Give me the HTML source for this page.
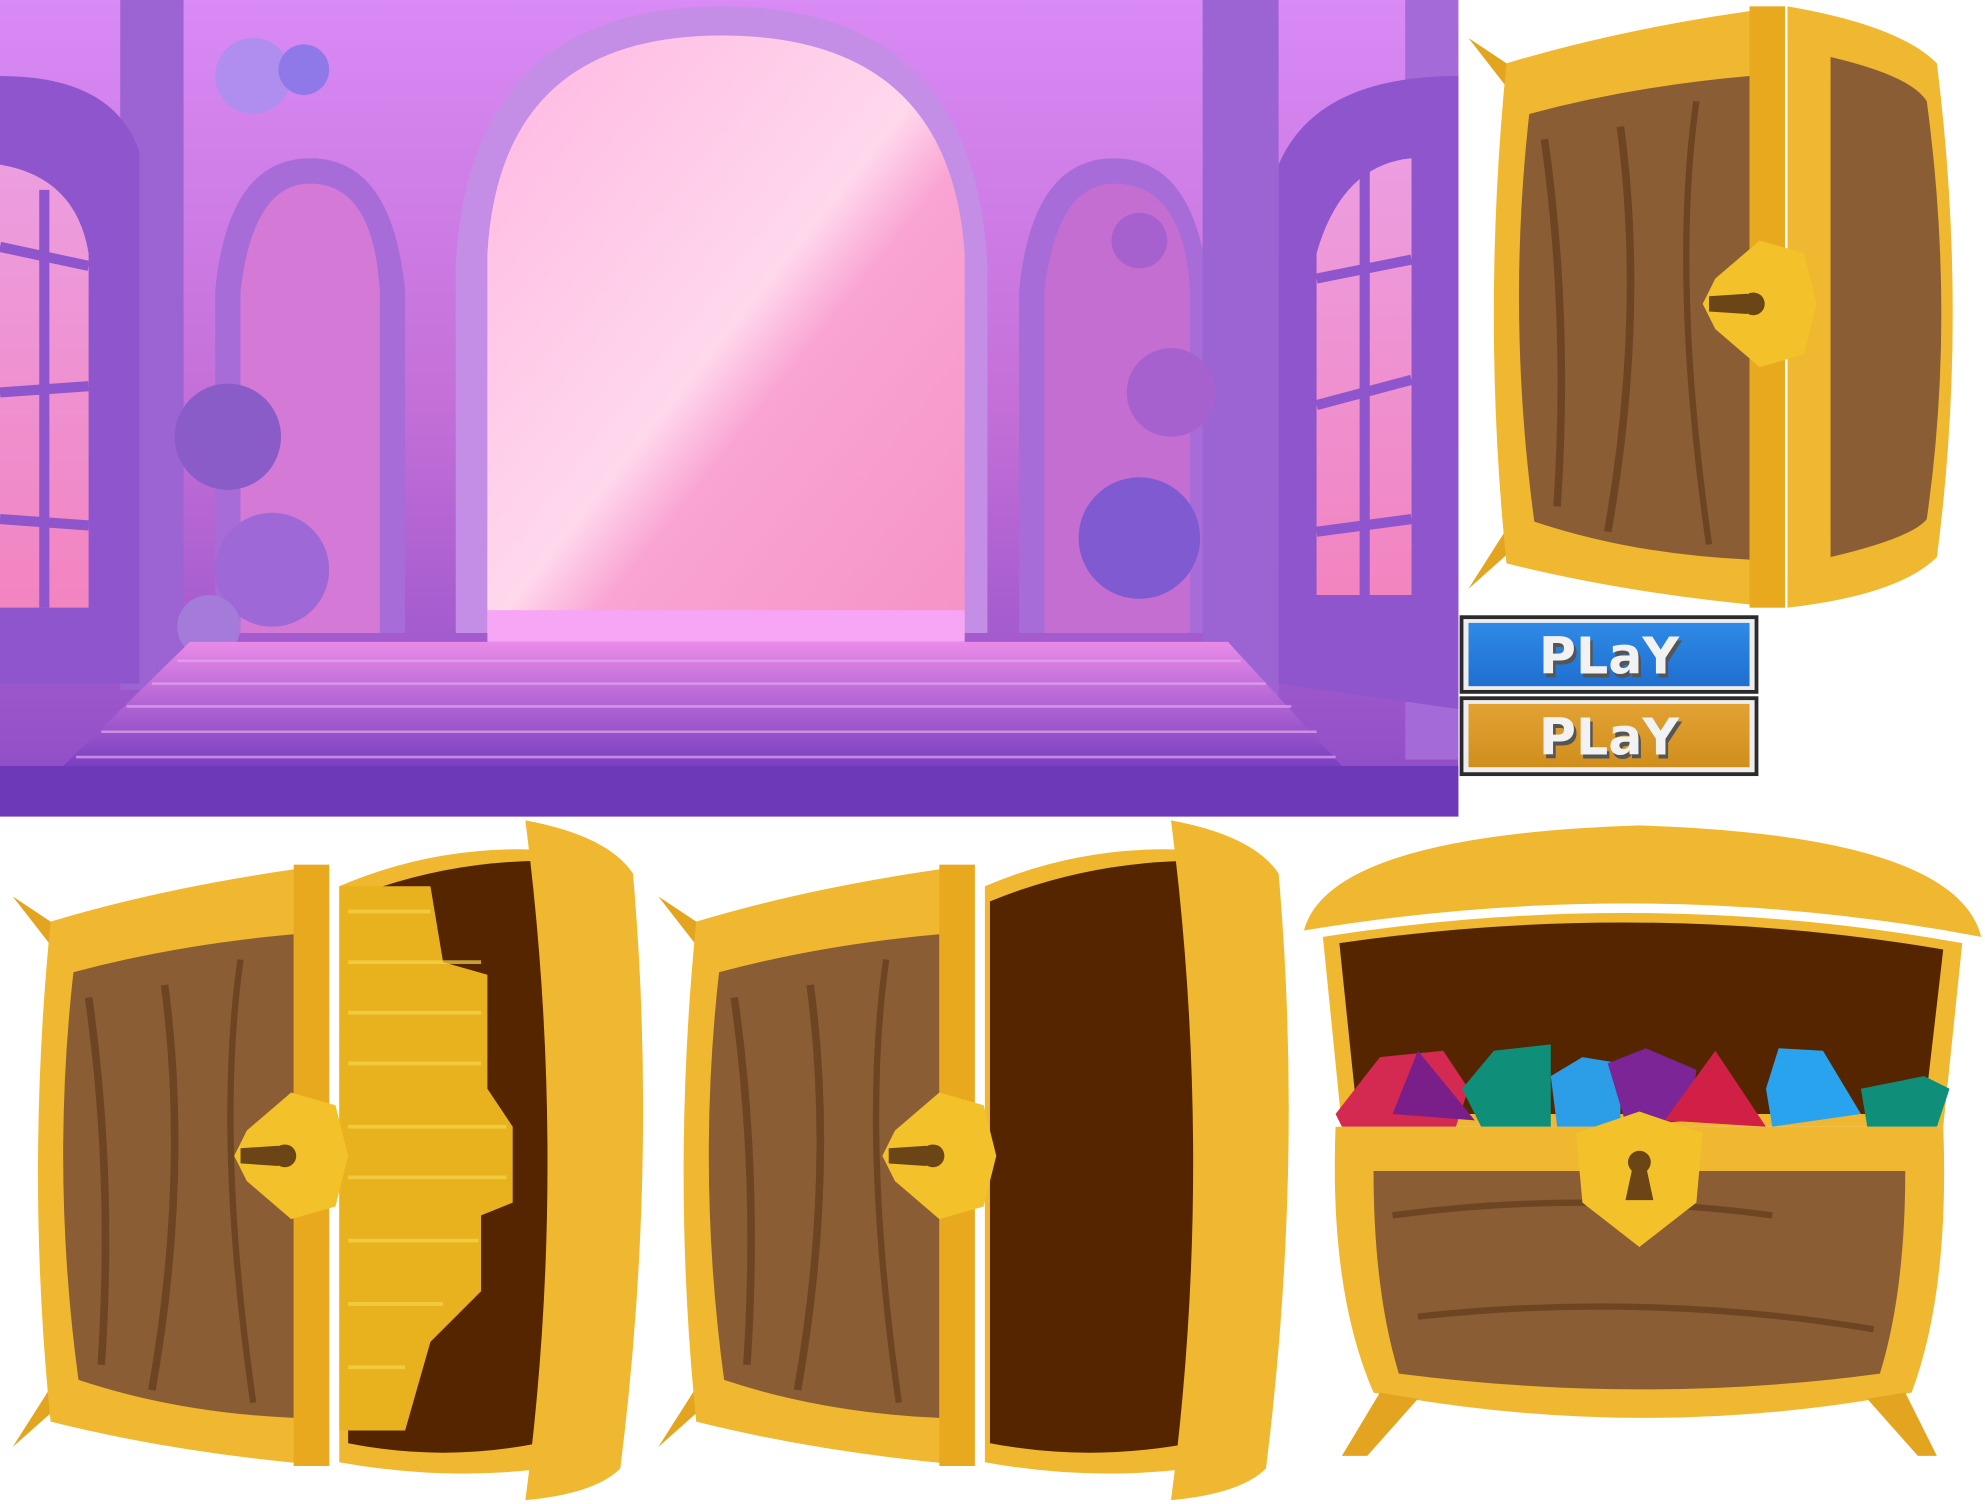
<!DOCTYPE html>
<html><head><meta charset="utf-8"><style>
html,body{margin:0;padding:0;background:#fff;width:1985px;height:1504px;overflow:hidden}
svg{display:block}
</style></head><body>
<svg width="1985" height="1504" viewBox="0 0 1568 1188" xmlns="http://www.w3.org/2000/svg">
<defs>
<linearGradient id="sky" x1="0" y1="0" x2="0" y2="1"><stop offset="0" stop-color="#d98af5"/><stop offset="0.5" stop-color="#c46fd8"/><stop offset="1" stop-color="#8a4bc6"/></linearGradient>
<linearGradient id="door" x1="0" y1="0" x2="1" y2="1"><stop offset="0" stop-color="#ffb7e2"/><stop offset="0.5" stop-color="#ffd8ec"/><stop offset="0.6" stop-color="#f9a4d3"/><stop offset="1" stop-color="#f593c6"/></linearGradient>
<linearGradient id="floor" x1="0" y1="0" x2="0" y2="1"><stop offset="0" stop-color="#e98ae8"/><stop offset="1" stop-color="#7a3fc0"/></linearGradient>
<linearGradient id="win" x1="0" y1="0" x2="0" y2="1"><stop offset="0" stop-color="#ec9ee0"/><stop offset="1" stop-color="#f284c0"/></linearGradient>
<linearGradient id="blue" x1="0" y1="0" x2="0" y2="1"><stop offset="0" stop-color="#2f8ae6"/><stop offset="1" stop-color="#1f6fcf"/></linearGradient>
<linearGradient id="orng" x1="0" y1="0" x2="0" y2="1"><stop offset="0" stop-color="#e2a233"/><stop offset="1" stop-color="#d08e1c"/></linearGradient>
<g id="side">
 <path d="M10,30 L55,60 L45,75 Z" fill="#e3a520"/>
 <path d="M10,465 L55,425 L45,410 Z" fill="#e3a520"/>
 <path d="M40,50 Q140,20 260,5 L260,480 Q140,470 40,445 Q20,250 40,50Z" fill="#f0b731"/>
 <path d="M58,90 Q140,68 232,60 L232,442 Q140,438 62,412 Q40,250 58,90Z" fill="#8a5d34"/>
 <path d="M70,110 Q90,250 80,400" stroke="#6e4523" stroke-width="6" fill="none"/>
 <path d="M130,100 Q150,250 120,420" stroke="#6e4523" stroke-width="6" fill="none"/>
 <path d="M190,80 Q170,220 200,430" stroke="#6e4523" stroke-width="5" fill="none"/>
 <rect x="232" y="5" width="28" height="475" fill="#e8a91f"/>
</g>
<g id="lock">
 <path d="M0,-50 L35,-40 L45,0 L35,40 L0,50 L-35,20 L-45,0 L-35,-20Z" fill="#f3c22b"/>
 <path d="M-10,-8 L-40,-6 L-40,6 L-10,8Z" fill="#6b4515"/><circle cx="-5" cy="0" r="9" fill="#6b4515"/>
</g>
</defs>
<rect x="0" y="0" width="1152" height="645" fill="url(#sky)"/>
<path d="M360,500 L360,210 Q370,5 570,5 Q770,5 780,210 L780,500Z" fill="#c48ee6"/>
<path d="M385,500 L385,200 Q395,28 570,28 Q750,28 762,200 L762,500Z" fill="url(#door)"/>
<path d="M170,500 L170,230 Q180,125 245,125 Q310,125 320,230 L320,500Z" fill="#a86cd8"/>
<path d="M190,500 L190,230 Q200,145 245,145 Q295,145 300,230 L300,500Z" fill="#d47ad6"/>
<path d="M805,500 L805,230 Q815,125 880,125 Q945,125 955,230 L955,500Z" fill="#a86cd8"/>
<path d="M825,500 L825,230 Q835,145 880,145 Q935,145 940,230 L940,500Z" fill="#c46ed2"/>
<rect x="95" y="0" width="50" height="545" fill="#9c63d3"/>
<rect x="950" y="0" width="60" height="560" fill="#9c63d3"/>
<rect x="1110" y="0" width="42" height="600" fill="#a36ad8"/>
<path d="M0,60 Q90,60 110,120 L110,540 L0,540Z" fill="#8e55cc"/>
<path d="M0,130 Q60,140 70,200 L70,480 L0,480Z" fill="url(#win)"/>
<path d="M0,195 L70,210 M0,310 L70,305 M0,410 L70,415 M35,150 L35,480" stroke="#8e55cc" stroke-width="8"/>
<path d="M1152,60 Q1040,60 1010,130 L1010,540 L1152,560Z" fill="#8e55cc"/>
<path d="M1040,200 Q1060,130 1115,125 L1115,470 L1040,470Z" fill="url(#win)"/>
<path d="M1040,220 L1115,205 M1040,320 L1115,300 M1040,420 L1115,410 M1078,130 L1078,470" stroke="#8e55cc" stroke-width="8"/>
<circle cx="215" cy="450" r="45" fill="#9e68d6"/><circle cx="180" cy="345" r="42" fill="#8a5cc8"/><circle cx="165" cy="495" r="25" fill="#a57bd9"/>
<circle cx="900" cy="425" r="48" fill="#7f5ad0"/><circle cx="925" cy="310" r="35" fill="#a661cf"/><circle cx="900" cy="190" r="22" fill="#a661cf"/>
<circle cx="200" cy="60" r="30" fill="#b08ef0"/><circle cx="240" cy="55" r="20" fill="#8f79e8"/>
<rect x="385" y="482" width="377" height="25" fill="#f6a6f4"/>
<path d="M150,507 L970,507 L1060,605 L50,605Z" fill="url(#floor)"/>
<path d="M140,522 L980,522 M120,540 L1000,540 M100,558 L1020,558 M80,578 L1040,578 M60,598 L1055,598" stroke="#e6a7ee" stroke-width="2" opacity="0.7"/>
<rect x="0" y="605" width="1152" height="40" fill="#6e39b8"/>
<use href="#side" x="1150" y="0"/>
<path d="M1412,5 Q1500,20 1530,50 Q1555,250 1530,440 Q1500,470 1412,480Z" fill="#f0b731"/>
<path d="M1446,45 Q1510,60 1522,80 Q1545,250 1522,410 Q1510,425 1446,440Z" fill="#8a5d34"/>
<use href="#lock" x="1390" y="240"/>
<rect x="1153" y="486" width="236" height="62" fill="#2b2b2b"/><rect x="1156" y="489" width="230" height="56" fill="#eeeeee"/><rect x="1160" y="492" width="222" height="50" fill="url(#blue)"/>
<text x="1273" y="535" text-anchor="middle" font-family="DejaVu Sans, sans-serif" font-weight="bold" font-size="40" fill="#555">PLaY</text>
<text x="1271" y="532" text-anchor="middle" font-family="DejaVu Sans, sans-serif" font-weight="bold" font-size="40" fill="#f2f2f2">PLaY</text>
<rect x="1153" y="550" width="236" height="63" fill="#2b2b2b"/><rect x="1156" y="553" width="230" height="57" fill="#eeeeee"/><rect x="1160" y="556" width="222" height="50" fill="url(#orng)"/>
<text x="1273" y="599" text-anchor="middle" font-family="DejaVu Sans, sans-serif" font-weight="bold" font-size="40" fill="#555">PLaY</text>
<text x="1271" y="596" text-anchor="middle" font-family="DejaVu Sans, sans-serif" font-weight="bold" font-size="40" fill="#f2f2f2">PLaY</text>
<use href="#side" x="0" y="678"/>
<path d="M268,700 Q350,665 440,672 Q470,900 430,1160 Q350,1170 268,1155Z" fill="#f0b731"/>
<path d="M275,710 Q350,680 430,680 Q460,900 425,1140 Q350,1155 275,1140Z" fill="#552500"/>
<path d="M415,648 Q480,660 500,690 Q520,920 490,1160 Q470,1180 415,1185 Q450,920 415,648Z" fill="#f0b731"/>
<path d="M268,700 L340,700 L350,760 L385,770 L385,860 L405,890 L405,950 L380,960 L380,1020 L340,1060 L320,1130 L268,1130Z" fill="#e8b21f"/>
<g stroke="#f5d54a" stroke-width="3" opacity="0.7"><path d="M275,720 L340,720 M275,760 L380,760 M275,800 L380,800 M275,840 L380,840 M275,890 L400,890 M275,930 L400,930 M275,980 L378,980 M275,1030 L350,1030 M275,1080 L320,1080"/></g>
<use href="#lock" x="230" y="913"/>
<use href="#side" x="510" y="678"/>
<path d="M778,700 Q860,665 950,672 Q980,900 940,1160 Q860,1170 778,1155Z" fill="#f0b731"/>
<path d="M782,712 Q860,680 945,680 Q975,900 940,1140 Q860,1155 782,1140Z" fill="#552500"/>
<path d="M925,648 Q990,660 1010,690 Q1030,920 1000,1160 Q980,1180 925,1185 Q960,920 925,648Z" fill="#f0b731"/>
<use href="#lock" x="742" y="913"/>
<path d="M1030,735 Q1050,660 1295,652 Q1545,660 1565,740 Q1300,690 1030,735Z" fill="#f0b731"/>
<path d="M1045,740 Q1300,700 1550,745 L1535,890 L1060,890Z" fill="#f0b731"/>
<path d="M1058,745 Q1300,710 1535,750 L1520,880 L1072,880Z" fill="#552500"/>
<polygon points="1055,880 1090,835 1140,830 1160,860 1150,890 1060,890" fill="#d42a52"/>
<polygon points="1100,880 1120,830 1165,885" fill="#7a1e8a"/>
<polygon points="1155,860 1180,830 1225,825 1225,890 1170,890" fill="#0f8f7a"/>
<polygon points="1225,850 1250,835 1280,840 1280,890 1230,890" fill="#2c9ee8"/>
<polygon points="1270,840 1300,828 1340,845 1335,885 1285,890" fill="#7b2597"/>
<polygon points="1315,885 1355,830 1395,890" fill="#d12046"/>
<polygon points="1395,860 1405,828 1440,830 1470,880 1400,890" fill="#2aa3ee"/>
<polygon points="1470,860 1520,850 1540,860 1530,890 1475,890" fill="#0f8f7a"/>
<path d="M1055,890 L1535,890 Q1540,1020 1510,1100 Q1300,1140 1085,1100 Q1050,1020 1055,890Z" fill="#f0b731"/>
<path d="M1085,925 L1505,925 Q1505,1020 1485,1085 Q1300,1110 1105,1085 Q1085,1020 1085,925Z" fill="#8a5d34"/>
<path d="M1100,960 Q1250,940 1400,960 M1120,1040 Q1300,1020 1480,1050" stroke="#6e4523" stroke-width="5" fill="none"/>
<path d="M1090,1100 L1060,1150 L1080,1150 L1120,1105Z M1475,1105 L1515,1150 L1530,1150 L1505,1100Z" fill="#e3a520"/>
<path d="M1245,895 L1295,878 L1345,895 L1340,950 L1295,985 L1250,950Z" fill="#f3c22b"/>
<circle cx="1295" cy="918" r="9" fill="#6b4515"/><path d="M1290,920 L1284,948 L1306,948 L1300,920Z" fill="#6b4515"/>
</svg>
</body></html>
